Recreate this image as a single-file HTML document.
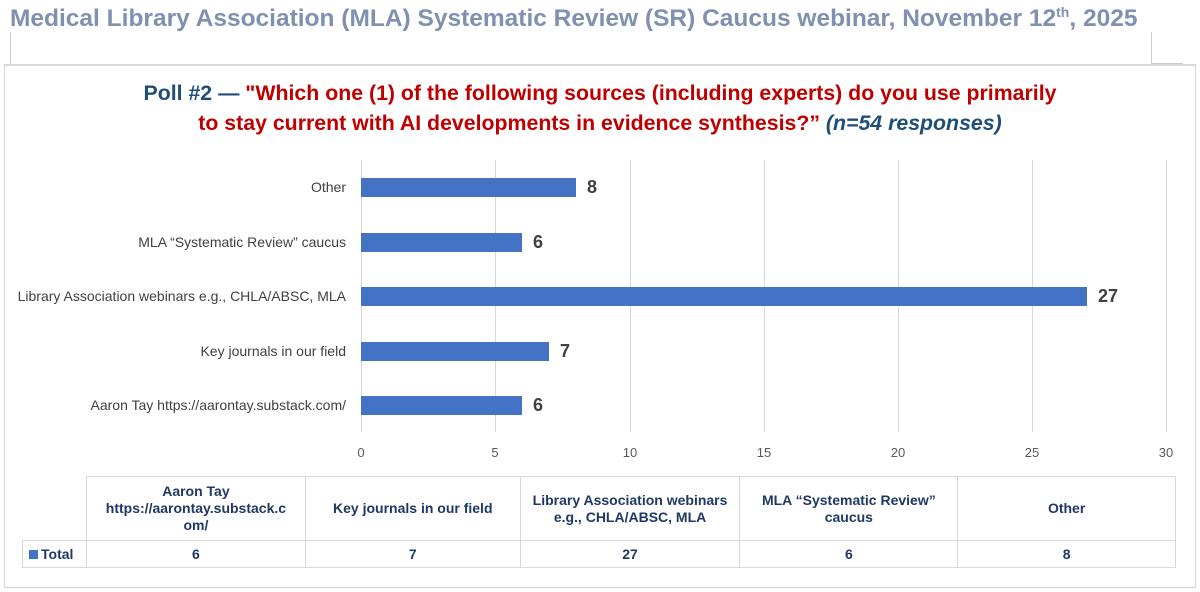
<!DOCTYPE html>
<html><head><meta charset="utf-8"><style>
*{margin:0;padding:0;box-sizing:border-box}
body{width:1200px;height:592px;background:#fff;font-family:"Liberation Sans",sans-serif;position:relative;overflow:hidden}
.a{position:absolute;white-space:nowrap}
.title{left:10px;top:4px;font-size:24.5px;font-weight:bold;color:#7f90b1}
.box{left:4px;top:64px;width:1192px;height:524px;border:1px solid #d6d6d6;border-top:2px solid #d9d9d9}
.poll{left:0;width:1200px;text-align:center;font-size:21.3px;font-weight:bold;color:#c00000}
.lbl{right:854px;font-size:14px;color:#404040}
.grid{top:160px;height:272px;width:1px;background:#d9d9d9}
.bar{left:361px;height:19px;background:#4472c4}
.val{font-size:18px;font-weight:bold;color:#404040}
.tick{top:445px;font-size:13px;color:#595959;width:30px;text-align:center}
table{position:absolute;border-collapse:collapse;font-size:14px;font-weight:bold;color:#1f3864}
td{border:1.5px solid #d9d9d9;text-align:center;line-height:17px}
</style></head><body>
<div class="a title">Medical Library Association (MLA) Systematic Review (SR) Caucus webinar, November 12<sup style="font-size:14px">th</sup>, 2025</div>
<div class="a" style="left:10px;top:32px;width:1px;height:32px;background:#ccc"></div>
<div class="a" style="left:1151px;top:32px;width:1px;height:32px;background:#ccc"></div>
<div class="a" style="left:1151px;top:63px;width:32px;height:1px;background:#ccc"></div>
<div class="a box"></div>
<div class="a poll" style="top:81px"><span style="color:#1f4e79">Poll #2 — </span>"Which one (1) of the following sources (including experts) do you use primarily</div>
<div class="a poll" style="top:111px">to stay current with AI developments in evidence synthesis?” <i style="color:#1f4e79">(n=54 responses)</i></div>

<div class="a grid" style="left:361px"></div>
<div class="a grid" style="left:495px"></div>
<div class="a grid" style="left:630px"></div>
<div class="a grid" style="left:764px"></div>
<div class="a grid" style="left:898px"></div>
<div class="a grid" style="left:1032px"></div>
<div class="a grid" style="left:1166px"></div>

<div class="a lbl" style="top:179px">Other</div>
<div class="a lbl" style="top:234px">MLA “Systematic Review” caucus</div>
<div class="a lbl" style="top:288px">Library Association webinars e.g., CHLA/ABSC, MLA</div>
<div class="a lbl" style="top:343px">Key journals in our field</div>
<div class="a lbl" style="top:397px">Aaron Tay https://aarontay.substack.com/</div>

<div class="a bar" style="top:178px;width:215px"></div><div class="a val" style="left:587px;top:177px">8</div>
<div class="a bar" style="top:233px;width:161px"></div><div class="a val" style="left:533px;top:232px">6</div>
<div class="a bar" style="top:287px;width:726px"></div><div class="a val" style="left:1098px;top:286px">27</div>
<div class="a bar" style="top:342px;width:188px"></div><div class="a val" style="left:560px;top:341px">7</div>
<div class="a bar" style="top:396px;width:161px"></div><div class="a val" style="left:533px;top:395px">6</div>

<div class="a tick" style="left:346px">0</div>
<div class="a tick" style="left:480px">5</div>
<div class="a tick" style="left:615px">10</div>
<div class="a tick" style="left:749px">15</div>
<div class="a tick" style="left:883px">20</div>
<div class="a tick" style="left:1017px">25</div>
<div class="a tick" style="left:1151px">30</div>

<table style="left:22px;top:476px;width:1154px">
<tr style="height:64px"><td style="width:64px;border-top:none;border-left:none"></td>
<td style="width:219px">Aaron Tay<br>https://aarontay.substack.c<br>om/</td>
<td style="width:215px">Key journals in our field</td>
<td style="width:220px">Library Association webinars<br>e.g., CHLA/ABSC, MLA</td>
<td style="width:218px">MLA “Systematic Review”<br>caucus</td>
<td style="width:218px">Other</td></tr>
<tr style="height:27px"><td style="text-align:left;padding-left:6px"><span style="display:inline-block;width:9px;height:9px;background:#4472c4;margin-right:3px"></span>Total</td>
<td>6</td><td>7</td><td>27</td><td>6</td><td>8</td></tr>
</table>
</body></html>
